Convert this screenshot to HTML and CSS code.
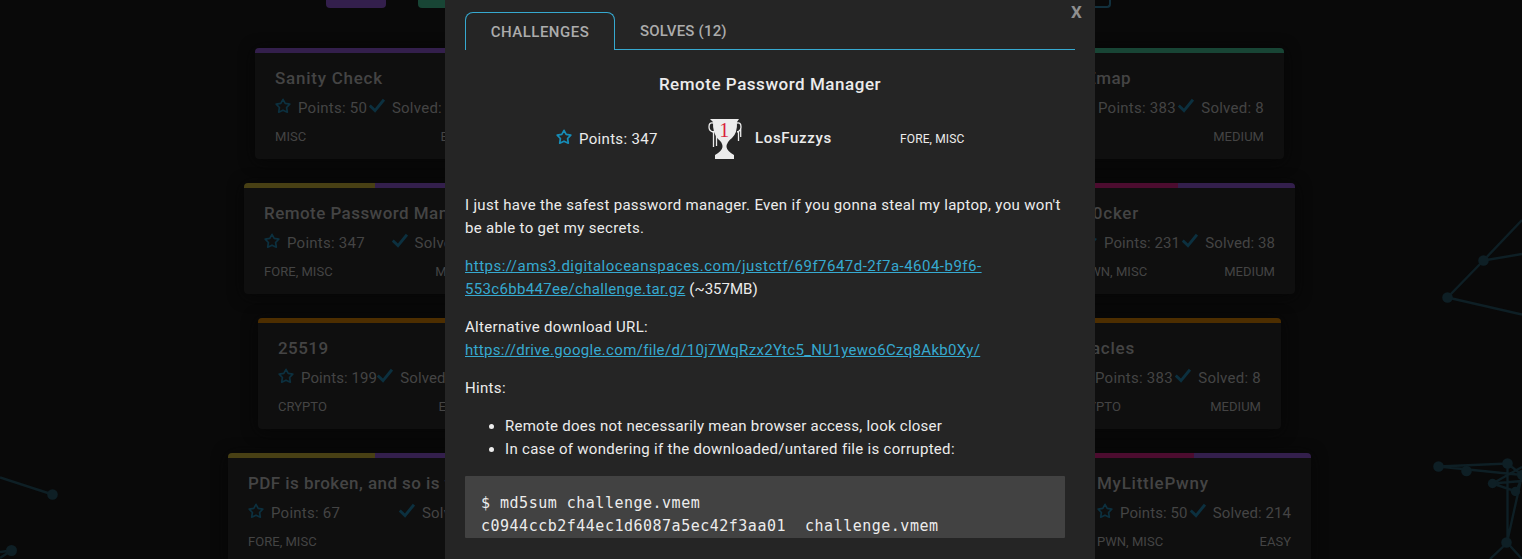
FILE: index.html
```
<!DOCTYPE html>
<html lang="en">
<head>
<meta charset="utf-8">
<title>Challenges</title>
<link rel="stylesheet" href="styles.css">
</head>
<body>
<svg width="0" height="0" class="defs">
  <symbol id="star" viewBox="0 0 16 16"><path d="M8 1.300 L10.200 5.300 L14.800 6.100 L11.600 9.500 L12.300 14.200 L8 12.200 L3.700 14.200 L4.400 9.500 L1.200 6.100 L5.800 5.300 Z" fill="none" stroke="currentColor" stroke-width="1.700" stroke-linejoin="round"/></symbol>
  <symbol id="check" viewBox="0 0 16 16"><path d="M1.800 8.500 L6 12.600 L14 2.800" fill="none" stroke="currentColor" stroke-width="2.900" stroke-linecap="square"/></symbol>
</svg>
<div class="page">
  <svg class="network" width="1522" height="559" viewBox="0 0 1522 559">
    <g stroke="currentColor" stroke-width="2.4" fill="none">
      <path d="M1447.5 297.5L1483.5 260.5L1522 220M1483.5 260.5L1522 254M1447.5 297.5L1522 314.500"/>
      <path d="M1522 475L1438.500 466.500L1507.500 463.500V542.500L1490 559M1507 542.500L1522 559M1507.500 463.500L1522 475L1507 542.500M1492.500 483.500L1522 467M1492.500 483.500L1522 481M1492.500 483.500L1516 491.500L1522 478"/>
      <path d="M0 477.500L52.500 494.500M0 552L11.500 550.500L0 558"/>
    </g>
    <g fill="currentColor">
      <circle cx="1447.500" cy="297.500" r="5.300"/><circle cx="1483.500" cy="260.500" r="5.300"/><circle cx="1438.500" cy="466.500" r="5.300"/><circle cx="1466.500" cy="471" r="5.300"/><circle cx="1507.500" cy="463.500" r="5.300"/><circle cx="1492.500" cy="483.500" r="4.700"/><circle cx="1515.500" cy="491.500" r="4.700"/><circle cx="1522" cy="475" r="5"/><circle cx="1506.500" cy="542.500" r="5.300"/><circle cx="52.500" cy="494.500" r="5.300"/><circle cx="11.500" cy="550.500" r="5.500"/>
    </g>
  </svg>
  <div class="filters"><i class="filter purple"></i><i class="filter green"></i><i class="filter outline"></i></div>
  <div class="rows">
    <div class="row r1">
      <article class="card c237"><div class="bar"><i class="purple"></i></div><h3 class="wide">Sanity Check</h3>
        <div class="stats"><span><svg class="ic"><use href="#star"/></svg>Points: 50</span><span><svg class="ic"><use href="#check"/></svg>Solved: 340</span></div>
        <div class="meta"><span>MISC</span><span>EASY</span></div></article>
      <article class="card c229"><div class="bar"><i class="green"></i></div><h3>REmap</h3>
        <div class="stats"><span><svg class="ic"><use href="#star"/></svg>Points: 383</span><span><svg class="ic"><use href="#check"/></svg>Solved: 8</span></div>
        <div class="meta"><span>RE</span><span>MEDIUM</span></div></article>
    </div>
    <div class="row r2">
      <article class="card c262"><div class="bar"><i class="yellow"></i><i class="purple"></i></div><h3>Remote Password Manager</h3>
        <div class="stats"><span><svg class="ic"><use href="#star"/></svg>Points: 347</span><span><svg class="ic"><use href="#check"/></svg>Solved: 12</span></div>
        <div class="meta"><span>FORE, MISC</span><span>MEDIUM</span></div></article>
      <article class="card c234"><div class="bar"><i class="pink"></i><i class="purple"></i></div><h3 class="wide">D0cker</h3>
        <div class="stats tight"><span><svg class="ic"><use href="#star"/></svg>Points: 231</span><span><svg class="ic"><use href="#check"/></svg>Solved: 38</span></div>
        <div class="meta"><span>PWN, MISC</span><span>MEDIUM</span></div></article>
    </div>
    <div class="row r3">
      <article class="card c232"><div class="bar"><i class="orange"></i></div><h3>25519</h3>
        <div class="stats tight"><span><svg class="ic"><use href="#star"/></svg>Points: 199</span><span><svg class="ic"><use href="#check"/></svg>Solved: 51</span></div>
        <div class="meta"><span>CRYPTO</span><span>EASY</span></div></article>
      <article class="card c229"><div class="bar"><i class="orange"></i></div><h3 class="wide">Oracles</h3>
        <div class="stats"><span><svg class="ic"><use href="#star"/></svg>Points: 383</span><span><svg class="ic"><use href="#check"/></svg>Solved: 8</span></div>
        <div class="meta"><span>CRYPTO</span><span>MEDIUM</span></div></article>
    </div>
    <div class="row r4">
      <article class="card c294"><div class="bar"><i class="yellow"></i><i class="purple"></i></div><h3>PDF is broken, and so is this file</h3>
        <div class="stats"><span><svg class="ic"><use href="#star"/></svg>Points: 67</span><span><svg class="ic"><use href="#check"/></svg>Solved: 149</span></div>
        <div class="meta"><span>FORE, MISC</span><span>EASY</span></div></article>
      <article class="card c234"><div class="bar"><i class="pink"></i><i class="purple"></i></div><h3 class="wide">MyLittlePwny</h3>
        <div class="stats tight"><span><svg class="ic"><use href="#star"/></svg>Points: 50</span><span><svg class="ic"><use href="#check"/></svg>Solved: 214</span></div>
        <div class="meta"><span>PWN, MISC</span><span>EASY</span></div></article>
    </div>
  </div>
  <section class="modal">
    <span class="close">X</span>
    <nav class="tabs"><span class="tab active">CHALLENGES</span><span class="tab">SOLVES (12)</span></nav>
    <h2>Remote Password Manager</h2>
    <div class="summary">
      <span class="pts"><svg class="ic"><use href="#star"/></svg>Points: 347</span>
      <span class="team"><svg class="cup" width="34" height="40" viewBox="0 0 34 40">
        <path d="M2 0H31L29 3Q29.500 14 24 19Q18.500 23 18.500 28Q19 32 26 36V40H7V36Q14 32 14.500 28Q14.500 23 10 20Q4.500 14 5 3Z" fill="#ececec"/>
        <path d="M5 4Q1 3 1 8Q1 12 5 13M29 4Q33 3 33 8Q33 12 29 13M5.500 12V28M8.500 17V27M30.500 12V22M32.700 9V18" stroke="#ececec" stroke-width="1.300" fill="none"/>
        <text x="16.500" y="18" text-anchor="middle" class="rank">1</text></svg><span class="name">LosFuzzys</span></span>
      <span class="cats">FORE, MISC</span>
    </div>
    <div class="desc">
      <p>I just have the safest password manager. Even if you gonna steal my laptop, you won't<br>be able to get my secrets.</p>
      <p><a><span class="mirror">https://ams3.digitaloceanspaces.com/justctf/69f7647d-2f7a-4604-b9f6-</span><br>553c6bb447ee/challenge.tar.gz</a> <span class="size">(~357MB)</span></p>
      <p>Alternative download URL:<br><a>https://drive.google.com/file/d/10j7WqRzx2Ytc5_NU1yewo6Czq8Akb0Xy/</a></p>
      <p>Hints:</p>
      <ul><li class="first">Remote does not necessarily mean browser access, look closer</li><li>In case of wondering if the downloaded/untared file is corrupted:</li></ul>
      <pre>$ md5sum challenge.vmem
c0944ccb2f44ec1d6087a5ec42f3aa01  challenge.vmem</pre>
    </div>
  </section>
</div>
</body>
</html>
```
FILE: styles.css
```
* { box-sizing: border-box; }
body { margin: 0; background: #090909; font-family: Roboto, "Liberation Sans", sans-serif; font-size: 15px; line-height: 23px; letter-spacing: .32px; }
.defs { position: absolute; }
.page { position: relative; height: 559px; overflow: hidden; color: #444; }
.network { position: absolute; left: 0; top: 0; color: #0e1f25; }
.filters { position: relative; display: flex; height: 8px; padding-left: 326px; }
.filter { width: 60px; margin-right: 32px; border-radius: 0 0 4px 4px; }
.filter.outline { margin-left: 541px; border: 2px solid #12303d; border-top: 0; }
.rows { position: relative; display: flex; flex-direction: column; gap: 24px; margin-top: 40px; align-items: center; padding-left: 17px; }
.row { display: flex; justify-content: space-between; }
.r1 { width: 1029px; } .r2 { width: 1051px; } .r3 { width: 1023px; } .r4 { width: 1083px; }
.card { height: 111px; background: #0f0f0f; border-radius: 4px; overflow: hidden; box-shadow: 0 2px 15px #060606; }
.c237 { width: 237px; } .c229 { width: 229px; } .c262 { width: 262px; } .c234 { width: 234px; } .c232 { width: 232px; } .c294 { width: 294px; }
.bar { display: flex; height: 5px; }
.bar i { flex: 1; }
.purple { background: #331f4c; } .green { background: #184535; } .yellow { background: #484014; } .orange { background: #4d2e00; } .pink { background: #4c0c2f; }
.card h3 { margin: 14px 20px 0; font-size: 17px; font-weight: 500; line-height: 23px; white-space: nowrap; letter-spacing: .45px; }
.card h3.wide { letter-spacing: .75px; }
.stats, .meta { display: flex; justify-content: space-between; margin: 0 20px; white-space: nowrap; }
.stats { margin-top: 7px; letter-spacing: .25px; }
.stats.tight { letter-spacing: .08px; }
.meta { font-size: 13px; margin-top: 5px; letter-spacing: .03px; }
.ic { width: 16px; height: 16px; margin-right: 7px; color: #0c303f; vertical-align: -1px; }
.modal { position: absolute; left: 445px; top: 0; width: 650px; height: 559px; padding: 12px 20px 0; background: #252525; color: #ececec; }
.close { position: absolute; right: 13px; top: 1px; font-weight: 700; font-size: 17px; color: #8f8f8f; }
.tabs { display: flex; height: 38px; }
.tab { flex: 1; padding: 8px 25px 6px; color: #acacac; font-weight: 500; letter-spacing: .2px; border-bottom: 1px solid #36a9d0; }
.tab.active { flex: 0 0 150px; padding: 8px 0 0; text-align: center; letter-spacing: .48px; border: 1px solid #36a9d0; border-bottom: 0; border-radius: 8px 8px 0 0; }
.modal h2 { margin: 23px 0 0; font-size: 17px; font-weight: 500; line-height: 23px; text-align: center; letter-spacing: .53px; }
.summary { display: flex; align-items: center; height: 40px; margin-top: 23px; padding-left: 91px; }
.summary .ic { color: #168db8; }
.pts { width: 152px; }
.team { display: flex; align-items: center; width: 192px; font-weight: 500; }
.name { padding-bottom: 2px; letter-spacing: .65px; }
.cup { margin-right: 13px; }
.rank { font: 20px "Liberation Serif", serif; fill: #d91e3c; }
.cats { font-size: 12px; letter-spacing: .12px; }
.desc { width: 600px; margin-top: 35px; white-space: nowrap; }
.desc p { margin: 0 0 15px; }
.desc a { color: #36a9d0; text-decoration: underline; }
.mirror { letter-spacing: .49px; }
.size { letter-spacing: 0; }
.desc ul { margin: 0 0 15px; padding-left: 40px; }
.desc li { letter-spacing: .3px; }
.desc li.first { letter-spacing: .25px; }
.desc pre { margin: 0; height: 62px; padding: 16px; background: #424242; font: 15px/23px "DejaVu Sans Mono", monospace; letter-spacing: .5px; border-radius: 1px; overflow: hidden; }
```
